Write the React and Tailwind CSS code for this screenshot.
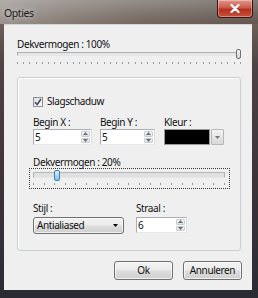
import React from "react";

function Arrow({ dir = "down", color = "#4d4d4d" }) {
  return (
    <svg width="5" height="3" viewBox="0 0 5 3">
      {dir === "down" ? (
        <path d="M0 0 H5 L2.5 3 Z" fill={color} />
      ) : (
        <path d="M0 3 H5 L2.5 0 Z" fill={color} />
      )}
    </svg>
  );
}

function Spin({ w, value }) {
  return (
    <div className={`flex h-[16px] ${w} border border-[#abadb3] border-r-[#dbdfe6] border-b-[#e3e9ef] bg-white`}>
      <div className="flex-1 pl-[1px] text-[10px] leading-[14px] text-[#111]">{value}</div>
      <div className="flex w-[10px] flex-col gap-px py-px pr-px">
        <div className="flex flex-1 items-center justify-center rounded-[1px] border border-[#c9ccd2] bg-gradient-to-b from-[#f8f8f8] to-[#dde0e4]">
          <Arrow dir="up" color="#6b6f76" />
        </div>
        <div className="flex flex-1 items-center justify-center rounded-[1px] border border-[#c9ccd2] bg-gradient-to-b from-[#f8f8f8] to-[#dde0e4]">
          <Arrow dir="down" color="#6b6f76" />
        </div>
      </div>
    </div>
  );
}

function Ticks({ n, className }) {
  return (
    <div className={`flex justify-between ${className}`}>
      {Array.from({ length: n }).map((_, i) => (
        <div key={i} className="h-[2px] w-px bg-[#9a9a9a]" />
      ))}
    </div>
  );
}

function Button({ children }) {
  return (
    <div className="flex h-[19px] w-[59px] items-center justify-center rounded-[3px] border border-[#707070] bg-[linear-gradient(180deg,#f2f2f2_0%,#ebebeb_48%,#dddddd_52%,#cfcfcf_100%)] text-[10px] text-[#111] shadow-[inset_0_0_0_1px_rgba(255,255,255,0.7)]">
      {children}
    </div>
  );
}

export default function App() {
  return (
    <div className="flex h-[298px] w-[258px] flex-col overflow-hidden bg-[linear-gradient(180deg,#8d8784_0%,#6e6259_7%,#4e4347_22%,#3c3439_60%,#2b2b33_100%)] font-['Noto_Sans','Open_Sans',sans-serif] tracking-[-0.4px]">
      {/* Title bar */}
      <div className="flex h-[24px] items-start justify-between bg-[linear-gradient(90deg,rgba(255,255,255,0.32)_0%,rgba(255,255,255,0.18)_25%,rgba(255,255,255,0.05)_55%,rgba(0,0,0,0.08)_100%)]">
        <div className="pl-[4px] pt-[6px] text-[10.5px] leading-[14px] text-[#1a1a1a] [text-shadow:0_0_6px_rgba(255,255,255,0.8)]">
          Opties
        </div>
        <div className="mr-[5px] flex h-[18px] w-[36px] items-center justify-center rounded-b-[4px] border border-t-0 border-[#3a1410] bg-[linear-gradient(180deg,#e0968a_0%,#cc5a4a_45%,#b3321f_55%,#c8503a_100%)] shadow-[inset_0_0_0_1px_rgba(255,255,255,0.35)]">
          <svg width="10" height="9" viewBox="0 0 10 9">
            <path d="M1.5 1 L8.5 8 M8.5 1 L1.5 8" stroke="#fff" strokeWidth="2.2" strokeLinecap="round" />
          </svg>
        </div>
      </div>

      {/* Client area */}
      <div className="ml-[4px] flex h-[266px] w-[248px] flex-col border-t border-[#d6d6d6] bg-[#efefef] pl-[13px] text-[10px] text-[#111]">
        <div className="mt-[12px] h-[14px] leading-[14px]">Dekvermogen : 100%</div>

        {/* Slider 1 */}
        <div className="relative mt-[-2px] h-[20px] w-[224px]">
          <div className="absolute left-0 right-0 top-[3px] h-[4px] border border-[#b0b0b0] border-b-[#e6e6e6] bg-[#e4e6e8]" />
          <div className="absolute right-0 top-0 h-[10px] w-[5px] rounded-[2px] border border-[#707070] bg-gradient-to-b from-[#f4f4f4] to-[#d6d6d6]" />
          <Ticks n={37} className="absolute left-0 right-0 top-[13px]" />
        </div>

        {/* Group box */}
        <div className="mt-[8px] flex h-[174px] w-[224px] flex-col rounded-[3px] border border-[#c9ced2] pl-[15px] shadow-[inset_1px_1px_0_#fff]">
          <div className="mt-[18px] flex h-[11px] items-center gap-[4px]">
            <div className="flex h-[10px] w-[10px] items-center justify-center border border-[#8e8f8f] bg-gradient-to-br from-[#dcdcdc] to-[#fafafa]">
              <svg width="8" height="8" viewBox="0 0 8 8">
                <path d="M1 4.2 L3.2 6.5 L7 1" stroke="#404b6a" strokeWidth="1.5" fill="none" />
              </svg>
            </div>
            <span className="leading-[11px]">Slagschaduw</span>
          </div>

          <div className="mt-[10px] flex h-[11px] leading-[11px]">
            <div className="w-[67px]">Begin X :</div>
            <div className="w-[64px]">Begin Y :</div>
            <div>Kleur :</div>
          </div>

          <div className="mt-[1px] flex h-[16px]">
            <div className="w-[67px]">
              <Spin w="w-[59px]" value="5" />
            </div>
            <div className="w-[64px]">
              <Spin w="w-[55px]" value="5" />
            </div>
            <div className="flex h-[16px] w-[60px] gap-px">
              <div className="h-[16px] w-[46px] border border-[#9a9a9a] bg-black" />
              <div className="flex h-[16px] w-[13px] items-center justify-center rounded-[1px] border border-[#b7b7b7] bg-gradient-to-b from-[#f3f3f3] to-[#d9d9d9]">
                <Arrow dir="down" color="#777" />
              </div>
            </div>
          </div>

          <div className="mt-[12px] h-[11px] leading-[11px]">Dekvermogen : 20%</div>

          {/* Slider 2 with focus rect */}
          <div className="relative ml-[-4px] h-[21px] w-[201px] border border-dotted border-[#3a3a3a]">
            <div className="absolute left-[3px] right-[4px] top-[3px] h-[6px] border border-[#b4b4b4] border-b-[#e8e8e8] bg-[#dedfe0]" />
            <div className="absolute left-[24px] top-[1px] h-[11px] w-[6px] rounded-[2px] border border-[#3c7fb1] bg-gradient-to-b from-[#d8eefc] to-[#86c0e6]" />
            <Ticks n={19} className="absolute left-[3px] right-[4px] top-[14px]" />
          </div>

          <div className="mt-[14px] flex h-[11px] leading-[11px]">
            <div className="w-[103px]">Stijl :</div>
            <div>Straal :</div>
          </div>

          <div className="mt-[3px] flex h-[17px]">
            <div className="w-[103px]">
              <div className="flex h-[17px] w-[91px] items-center justify-between rounded-[3px] border border-[#707070] bg-[linear-gradient(180deg,#f2f2f2_0%,#ebebeb_48%,#dddddd_52%,#cfcfcf_100%)] pl-[3px] pr-[5px] shadow-[inset_0_0_0_1px_rgba(255,255,255,0.7)]">
                <span>Antialiased</span>
                <Arrow dir="down" color="#000" />
              </div>
            </div>
            <Spin w="w-[51px]" value="6" />
          </div>
        </div>

        {/* Buttons */}
        <div className="mt-[10px] flex w-[225px] justify-end gap-[10px]">
          <Button>Ok</Button>
          <Button>Annuleren</Button>
        </div>
      </div>
    </div>
  );
}
